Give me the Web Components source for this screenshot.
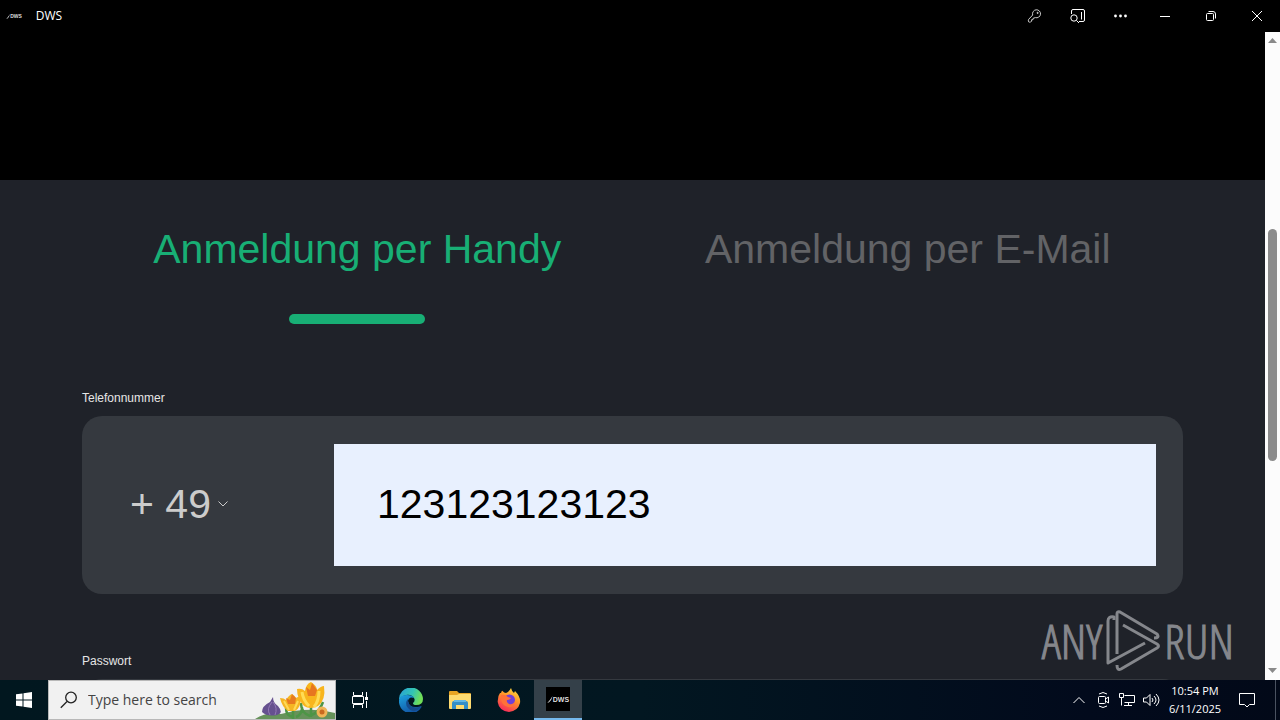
<!DOCTYPE html>
<html lang="de">
<head>
<meta charset="UTF-8">
<meta name="viewport" content="width=device-width, initial-scale=1">
<title>DWS</title>
<style>
    body {
        margin: 0;
        height: 100vh;
        overflow: hidden;
        display: flex;
        flex-direction: column;
        background: #000;
        font-family: "Liberation Sans", Arial, sans-serif;
    }
    page-view { flex: 1; min-height: 0; }
</style>
</head>
<body>
    <title-bar>DWS</title-bar>
    <page-view>
        <login-panel>
            <login-tabs slot="tabs"></login-tabs>
            <phone-field label="Telefonnummer" code="+ 49" value="123123123123"></phone-field>
            <password-field label="Passwort"></password-field>
        </login-panel>
        <any-watermark slot="overlay"></any-watermark>
    </page-view>
    <task-bar></task-bar>

<script>
class BaseElement extends HTMLElement {
    constructor() {
        super();
        this.attachShadow({ mode: 'open' });
    }

    connectedCallback() {
        this.shadowRoot.innerHTML = this.render();
    }
}

class TitleBar extends BaseElement {
    render() {
        return `
            <style>
                :host {
                    display: flex;
                    align-items: center;
                    height: 32px;
                    flex-shrink: 0;
                    background: #000;
                    color: #fff;
                    font: 12px/16px "Open Sans", "Noto Sans", sans-serif;
                }
                .logo { margin: 0 14px 0 6px; display: block; }
                .name { flex: 1; }
                button {
                    display: flex;
                    align-items: center;
                    justify-content: center;
                    width: 43px;
                    height: 32px;
                    padding: 0;
                    border: 0;
                    background: none;
                    color: inherit;
                }
                button.window { width: 46px; }
                button svg { fill: none; stroke: #fff; }
            </style>
            <dws-logo class="logo" style="--size: 5px"></dws-logo>
            <span class="name"><slot></slot></span>
            <button aria-label="Passwords">
                <svg width="16" height="16" style="stroke: #ccc"><path d="M8.3 9.6a4 4 0 1 0-2.6-2.6L1.7 11.3q-.6.6-.3 1.6l.3 1q.9.5 1.9.2l1-1v-1.4h1.4v-1.3z"/><circle cx="10.6" cy="4.9" r=".6" fill="#ccc"/></svg>
            </button>
            <button aria-label="Search">
                <svg width="16" height="16"><path d="M1.5 6V3q0-1.5 1.5-1.5h10q1.500 0 1.500 1.500v9q0 1.500-1.500 1.500H9M11.500 4v7.500"/><circle cx="4" cy="10" r="3.200"/><path d="M6.500 12.500l2.500 2.500"/></svg>
            </button>
            <button aria-label="More">
                <svg width="16" height="16" style="fill: #fff; stroke: none"><circle cx="2.500" cy="8" r="1.400"/><circle cx="7.500" cy="8" r="1.400"/><circle cx="12.500" cy="8" r="1.400"/></svg>
            </button>
            <button class="window" aria-label="Minimize">
                <svg width="10" height="10"><path d="M0 5.500h10"/></svg>
            </button>
            <button class="window" aria-label="Restore">
                <svg width="10" height="10"><rect x=".5" y="2.500" width="7" height="7" rx="1"/><path d="M2.500.5H7Q9.500.5 9.500 3v4.500"/></svg>
            </button>
            <button class="window" aria-label="Close">
                <svg width="10" height="10"><path d="M0 0l10 10M10 0L0 10"/></svg>
            </button>
        `;
    }
}

// Small wordmark with the slanted stroke, sized by --size
class DwsLogo extends BaseElement {
    render() {
        return `
            <style>
                :host { display: flex !important; align-items: center; color: #ddd; }
                svg { width: calc(var(--size) * 5 / 6); height: var(--size); }
                span { font: bold var(--size)/1 "Liberation Sans", sans-serif; }
            </style>
            <svg viewBox="0 0 6 8"><path d="M0 8Q3 5 6 0Q5 5 2 7z" fill="#ddd"/></svg>
            <span>DWS</span>
        `;
    }
}

class PageView extends BaseElement {
    render() {
        return `
            <style>
                :host { display: flex; position: relative; }
                .content {
                    flex: 1;
                    min-width: 0;
                    overflow: hidden;
                    display: flex;
                    flex-direction: column;
                }
                .hero { height: 148px; flex-shrink: 0; background: #000; }
                .scrollbar {
                    width: 15px;
                    display: flex;
                    flex-direction: column;
                    align-items: center;
                    background: #fcfcfc;
                }
                .scrollbar svg { width: 9px; height: 17px; fill: #8a8a8a; flex-shrink: 0; }
                .track { flex: 1; display: flex; flex-direction: column; }
                .before { flex: 180; }
                .thumb { flex: 232; width: 9px; border-radius: 5px; background: #8b8b8b; }
                .after { flex: 202; }
            </style>
            <div class="content">
                <div class="hero"></div>
                <slot></slot>
            </div>
            <div class="scrollbar">
                <svg viewBox="0 0 9 17"><path d="M0 11h9L4.500 6z"/></svg>
                <div class="track">
                    <div class="before"></div>
                    <div class="thumb"></div>
                    <div class="after"></div>
                </div>
                <svg viewBox="0 0 9 17"><path d="M0 5h9L4.500 10z"/></svg>
            </div>
            <slot name="overlay"></slot>
        `;
    }
}

class LoginPanel extends BaseElement {
    render() {
        return `
            <style>
                :host {
                    display: block;
                    flex: 1 0 auto;
                    background: #1f2229;
                    padding: 45px 82px 0;
                }
                .fields {
                    display: flex;
                    flex-direction: column;
                    gap: 60px;
                    margin-top: 67px;
                }
            </style>
            <slot name="tabs"></slot>
            <div class="fields"><slot></slot></div>
        `;
    }
}

class LoginTabs extends BaseElement {
    render() {
        return `
            <style>
                :host { display: flex; }
                button {
                    flex: 1;
                    display: flex;
                    flex-direction: column;
                    align-items: center;
                    gap: 41px;
                    padding: 0;
                    border: 0;
                    background: none;
                    color: #626366;
                    font: 41px/48px "Liberation Sans", Arial, sans-serif;
                    white-space: nowrap;
                }
                button.active { color: #18af75; }
                .active::after {
                    content: '';
                    width: 136px;
                    height: 10px;
                    border-radius: 5px;
                    background: #18af75;
                }
            </style>
            <button class="active">Anmeldung per Handy</button>
            <button>Anmeldung per E-Mail</button>
        `;
    }
}

const fieldStyles = `
    :host { display: block; }
    .label {
        display: block;
        margin-bottom: 11px;
        color: #e6e6e6;
        font-size: 12px;
        line-height: 14px;
    }
    .box {
        display: flex;
        align-items: center;
        padding: 28px 27px;
        border-radius: 20px;
        background: #35393f;
    }
    input {
        flex: 1;
        min-width: 0;
        box-sizing: border-box;
        height: 122px;
        padding: 0 43px 2px;
        border: 0;
        outline: 0;
        background: none;
        color: #000;
        font: 41px/48px "Liberation Sans", Arial, sans-serif;
    }
`;

class PhoneField extends BaseElement {
    render() {
        return `
            <style>
                ${fieldStyles}
                .code {
                    display: flex;
                    align-items: center;
                    gap: 7px;
                    width: 204px;
                    padding: 0 0 3px 21px;
                }
                select {
                    appearance: none;
                    padding: 0;
                    border: 0;
                    background: none;
                    color: #ccc;
                    font: 41px/48px "Liberation Sans", Arial, sans-serif;
                }
                input { background: #e8f0fe; }
            </style>
            <label class="label" for="phone">${this.getAttribute('label')}</label>
            <div class="box">
                <div class="code">
                    <select aria-label="Vorwahl"><option>${this.getAttribute('code')}</option></select>
                    <svg width="10" height="6" fill="none" stroke="#ccc"><path d="M.5.5L5 5L9.500.5"/></svg>
                </div>
                <input id="phone" type="tel" value="${this.getAttribute('value')}">
            </div>
        `;
    }
}

class PasswordField extends BaseElement {
    render() {
        return `
            <style>${fieldStyles}</style>
            <label class="label" for="password">${this.getAttribute('label')}</label>
            <div class="box"><input id="password" type="password"></div>
        `;
    }
}

class AnyWatermark extends BaseElement {
    render() {
        return `
            <style>
                :host {
                    position: absolute;
                    right: 46px;
                    bottom: 8px;
                    display: flex;
                    align-items: center;
                    gap: 3px;
                    color: #85878c;
                    font: 48px/62px "Open Sans Condensed Light", "Liberation Sans Narrow", sans-serif;
                    -webkit-text-stroke: 1px #85878c;
                    pointer-events: none;
                }
                svg { display: block; }
            </style>
            <span>ANY</span>
            <svg width="56" height="62" fill="none" stroke="#85878c" stroke-width="3" stroke-linejoin="round">
                <path d="M9 10V7Q3 6 3 11V53L40 33"/>
                <path d="M12 44V4Q12 1 15 2L52 24Q55 28 49 28"/>
                <path d="M18 15L52 34Q55 36 52 38L16 59Q12 61 12 55"/>
            </svg>
            <span>RUN</span>
        `;
    }
}

class TaskBar extends BaseElement {
    render() {
        return `
            <style>
                :host {
                    display: flex;
                    height: 40px;
                    flex-shrink: 0;
                    background: linear-gradient(90deg, #01171f, #021721 50%, #020a1c 85%, #020918);
                    color: #fff;
                    font-family: "Open Sans", "Noto Sans", sans-serif;
                }
                button {
                    display: flex;
                    align-items: center;
                    justify-content: center;
                    width: 48px;
                    height: 40px;
                    padding: 0;
                    border: 0;
                    background: none;
                    color: inherit;
                    font: inherit;
                }
                .search {
                    display: flex;
                    align-items: center;
                    width: 288px;
                    box-sizing: border-box;
                    border: 1px solid #b8b8b8;
                    background: #f1f1f1;
                }
                .search > svg { flex-shrink: 0; }
                .glass { margin: 0 10px 0 11px; }
                input {
                    flex: 1;
                    min-width: 0;
                    padding: 0;
                    border: 0;
                    outline: 0;
                    background: none;
                    font: 14px/20px "Open Sans", "Noto Sans", sans-serif;
                }
                input::placeholder { color: #444; opacity: 1; }
                .apps { display: flex; gap: 1px; margin-left: 3px; }
                .app.active {
                    box-sizing: border-box;
                    border-bottom: 2px solid #76b9ed;
                    background: #344049;
                }
                .tile {
                    display: flex;
                    align-items: center;
                    justify-content: center;
                    width: 24px;
                    height: 24px;
                    background: #000;
                }
                .tray { display: flex; margin-left: auto; }
                .tray button { width: 24px; }
                .tray svg { fill: none; stroke: #fff; }
                .tray .clock {
                    flex-direction: column;
                    width: 64px;
                    font-size: 11px;
                    line-height: 18px;
                    white-space: nowrap;
                }
                .tray .notes { width: 40px; }
                .tray .desktop { width: 5px; margin-left: 8px; border-left: 1px solid #4a5260; }
            </style>
            <button aria-label="Start">
                <svg width="16" height="16" fill="#fff"><path d="M0 2.300L6.500 1.400V7.500H0zM7.500 1.200L16 0V7.500H7.500zM0 8.500H6.500V14.600L0 13.700zM7.500 8.500H16V16L7.500 14.800z"/></svg>
            </button>
            <div class="search">
                <svg class="glass" width="18" height="18" fill="none" stroke="#222" stroke-width="1.300"><circle cx="11" cy="6.500" r="5.300"/><path d="M7 10.500L.8 16.700"/></svg>
                <input type="search" placeholder="Type here to search" aria-label="Type here to search">
                <svg width="80" height="38">
                    <path d="M0 38Q12 30 26 33Q54 25 80 32V38z" fill="#66925a"/>
                    <path d="M18 16q0 6 5 9q6 7-1 9q-10 2-15-3q0-6 8-10z" fill="#66508f"/>
                    <path d="M17 21q-6 7-2 13M18 21q5 6 2 13" stroke="#9278b4" fill="none"/>
                    <path d="M38 38V29M56 36V25M38 36Q31 35 31 27M41 36Q47 34 47 26M55 35Q46 32 46 22M57 34Q65 30 68 21" stroke="#4d9546" stroke-width="2.500" fill="none"/>
                    <path d="M25 17q4 0 6 2q3-5 6-6q3 2 4 4q3-2 5-1q0 11-6 14h-7q-6-4-8-13z" fill="#f5b523"/>
                    <path d="M31 17l4 2 2-6 4 4-1 6h-7z" fill="#e77a20"/>
                    <path d="M29 20l5 9M43 20l-4 9" stroke="#ffd957" stroke-width="2"/>
                    <path d="M42 8q5-1 8 2q1-7 6-9q6 4 6 8q4-4 7-4q2 14-6 20q-8 4-14 0q-7-7-7-17z" fill="#f8b51d"/>
                    <path d="M51 6l4 3 2-7 5 7-2 6h-7z" fill="#e77620"/>
                    <path d="M47 11q1 8 7 14M64 10q0 10-5 16" stroke="#ffdc55" stroke-width="3" fill="none"/>
                    <circle cx="67" cy="31" r="5.500" fill="#efb457"/><circle cx="67" cy="31" r="2.500" fill="#c96920"/>
                </svg>
            </div>
            <button aria-label="Task View">
                <svg width="18" height="18" fill="none" stroke="#fff"><path d="M2.500 1v3.500h9V1M2.500 17v-3.500h9V17M1.500 5.500h11v7h-11zM15.500 1v5M15.500 10v7"/><rect x="14.500" y="6.500" width="2" height="2" fill="#fff"/></svg>
            </button>
            <div class="apps">
                <button class="app" aria-label="Microsoft Edge">
                    <svg width="24" height="24">
                        <defs>
                            <linearGradient id="edge-top" x2="1" y2=".3"><stop stop-color="#289fd8"/><stop offset=".6" stop-color="#32c4b5"/><stop offset="1" stop-color="#70df58"/></linearGradient>
                            <linearGradient id="edge-low" y2="1" x2=".5"><stop stop-color="#1da4df"/><stop offset="1" stop-color="#1256a5"/></linearGradient>
                        </defs>
                        <path d="M0 12A12 12 0 0 1 24 11Q24 17 17 17Q14 17 14 15Q16 14 15.500 11Q13 6 7 7Q2 8 0 12z" fill="url(#edge-top)"/>
                        <path d="M0 12Q1 7 8 7Q14 7 15 10Q10 8 9 13Q10 21 21 18.500Q23 18 22.500 19A12 12 0 0 1 0 12z" fill="url(#edge-low)"/>
                        <path d="M9 11Q5 15 9 20Q12 24 16 23Q21 21 22.500 18.500Q11 22 9 13z" fill="#154b8c"/>
                    </svg>
                </button>
                <button class="app" aria-label="File Explorer">
                    <svg width="22" height="20">
                        <path d="M0 2q0-1 1-1h7l2 2h11q1 0 1 1v5H0z" fill="#e8a524"/>
                        <path d="M0 5h8l2-1h12v14q0 1-1 1H1q-1 0-1-1z" fill="#fedb70"/>
                        <path d="M3 19v-6q0-2 2-2h12q2 0 2 2v6h-4v-4H7v4z" fill="#348fc7"/>
                        <path d="M5 11h12" stroke="#63b8e4" stroke-width="2"/>
                    </svg>
                </button>
                <button class="app" aria-label="Firefox">
                    <svg width="24" height="24">
                        <defs><linearGradient id="fox" x1=".8" x2=".3" y2="1"><stop stop-color="#ffdf3e"/><stop offset=".45" stop-color="#ff9129"/><stop offset="1" stop-color="#f8275d"/></linearGradient></defs>
                        <path d="M4 5Q5 2 5.500 3Q7 5 9 5Q12 4 14 0Q15 4 17 5L18 3Q24 9 23 15Q21 23 12 24Q2 23 .7 14Q.5 8 3 5z" fill="url(#fox)"/>
                        <circle cx="12.500" cy="12" r="5.500" fill="#7040d8"/>
                        <path d="M4 7Q8 6 11 9L14 10Q13 12 10 12Q9 14 12 16Q16 17 18 13Q18 20 11 19Q4 17 4 10z" fill="#ff7139"/>
                    </svg>
                </button>
                <button class="app active" aria-label="DWS">
                    <span class="tile"><dws-logo style="--size: 7px"></dws-logo></span>
                </button>
            </div>
            <div class="tray">
                <button aria-label="Show hidden icons"><svg width="12" height="8"><path d="M.5 7L6 1.500L11.500 7"/></svg></button>
                <button aria-label="Meet Now"><svg width="14" height="16"><rect x="2.500" y="4.500" width="7" height="7" rx="1"/><path d="M9.500 7l3-2v6l-3-2M3 2Q7-1 11 2M3 14Q7 17 11 14"/></svg></button>
                <button aria-label="Network"><svg width="16" height="14"><path d="M5.500 2.500h10v7h-10M.5.5h4v4h-4zM2.500 4.500v8M5 12.500h8M9.500 9.500v3"/></svg></button>
                <button aria-label="Volume"><svg width="17" height="14"><path d="M.5 5h3L7 1.500v11L3.500 9H.5zM9 5q2 2 0 4M11 3q4 4 0 8M13 1q6 6 0 12"/></svg></button>
                <button class="clock"><span>10:54 PM</span><span>6/11/2025</span></button>
                <button class="notes" aria-label="Notifications"><svg width="16" height="16"><path d="M.5 1.500h15v11h-5L8 15l-2.500-2.500h-5z"/></svg></button>
                <button class="desktop" aria-label="Show desktop"></button>
            </div>
        `;
    }
}

customElements.define('dws-logo', DwsLogo);
customElements.define('title-bar', TitleBar);
customElements.define('page-view', PageView);
customElements.define('login-panel', LoginPanel);
customElements.define('login-tabs', LoginTabs);
customElements.define('phone-field', PhoneField);
customElements.define('password-field', PasswordField);
customElements.define('any-watermark', AnyWatermark);
customElements.define('task-bar', TaskBar);
</script>
</body>
</html>
